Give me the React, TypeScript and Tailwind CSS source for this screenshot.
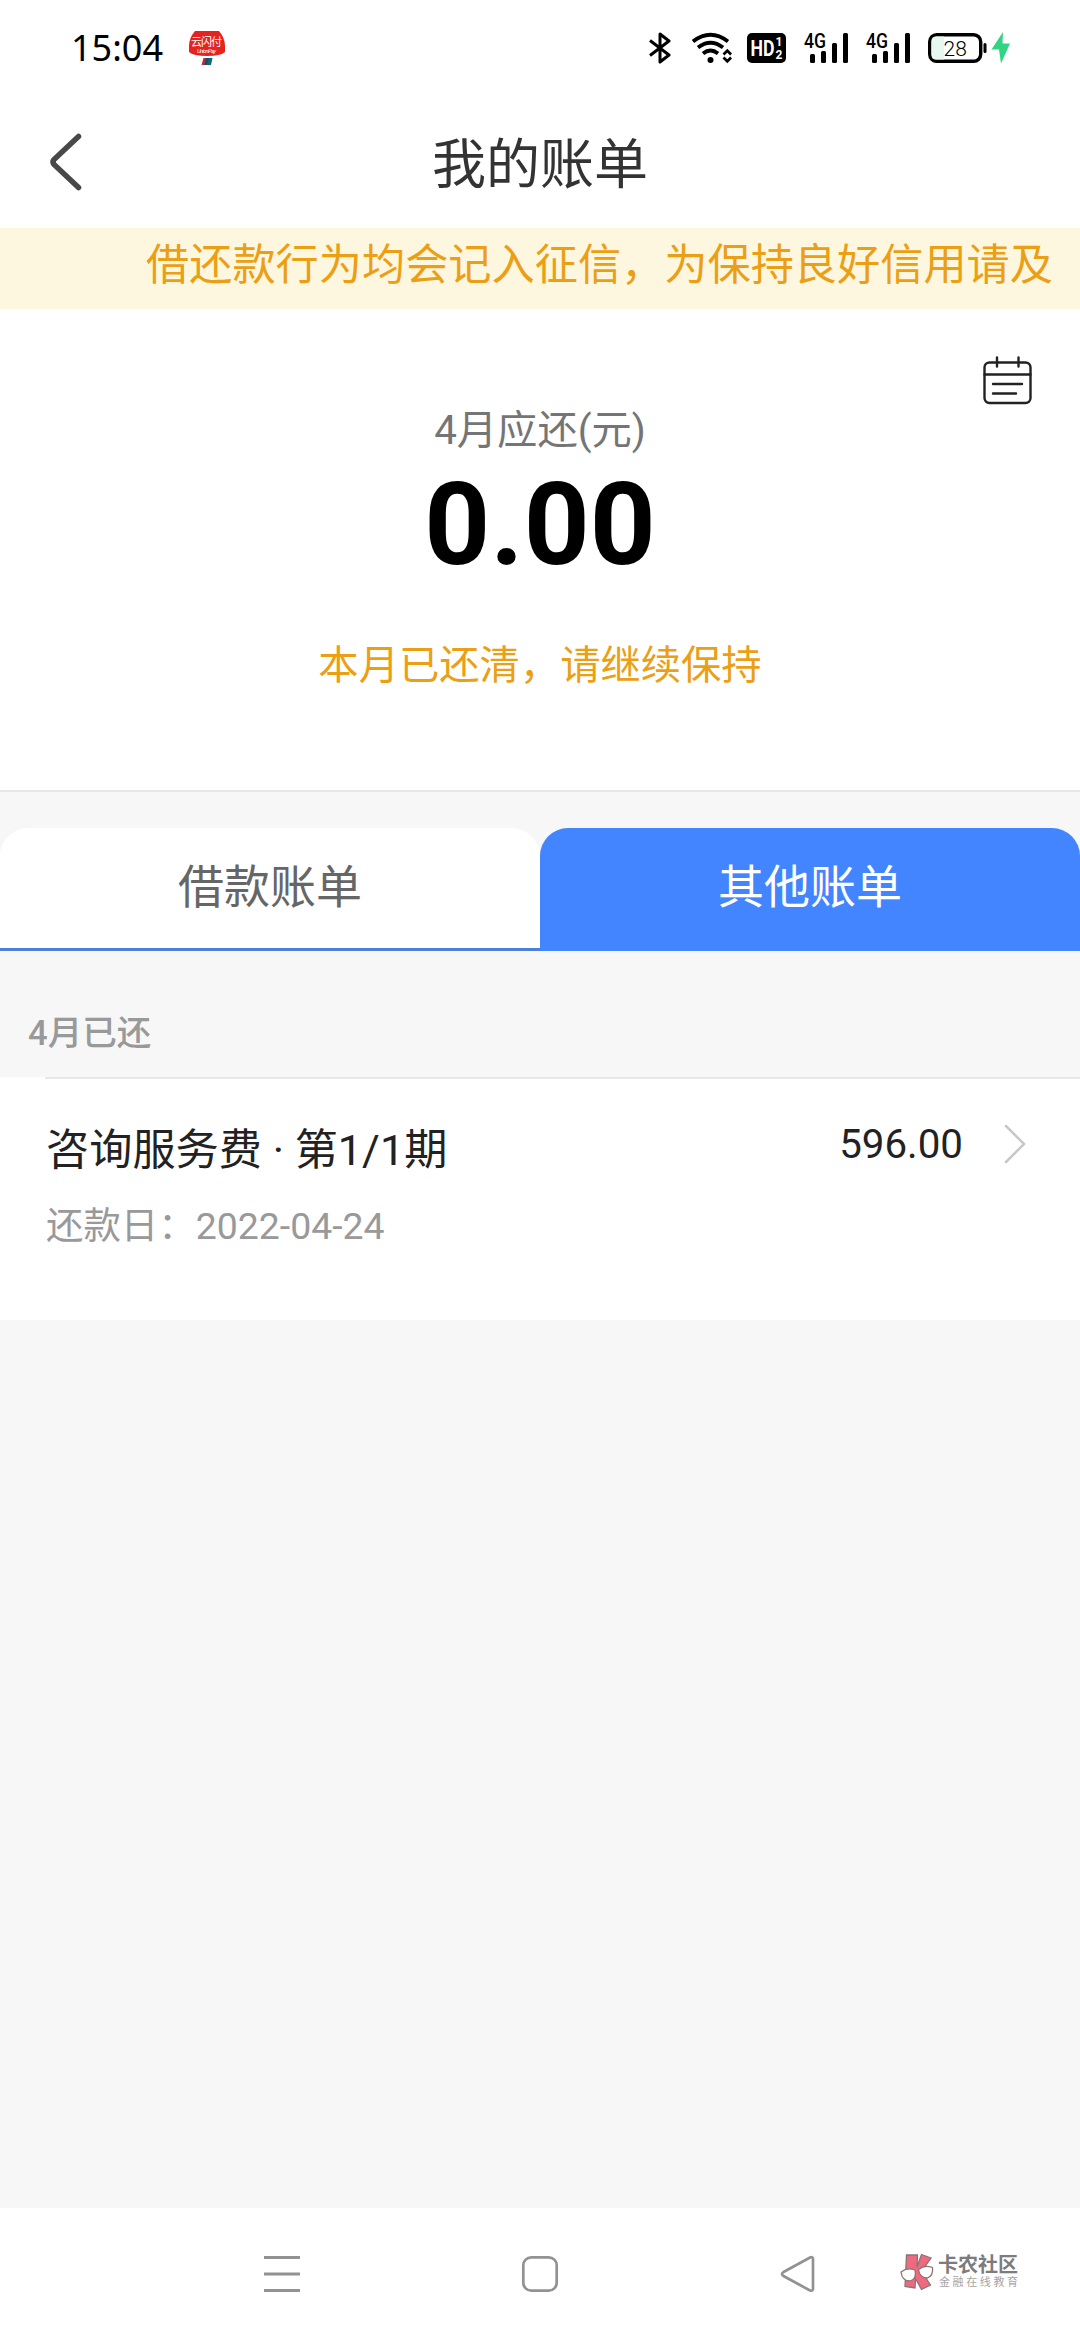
import React, { useState } from "react";

interface Bill {
  title: string;
  date: string;
  amount: string;
}

const tabs = ["借款账单", "其他账单"];

const bills: Bill[] = [
  { title: "咨询服务费 · 第1/1期", date: "2022-04-24", amount: "596.00" },
];

const SignalIcon: React.FC = () => (
  <svg width="46" height="40" viewBox="0 -4 46 40">
    <text
      x="0"
      y="15.500"
      fontSize="19.5"
      fontWeight="500"
      textLength="22"
      lengthAdjust="spacingAndGlyphs"
      fontFamily="Roboto, sans-serif"
    >
      4G
    </text>
    <rect x="6" y="22" width="5" height="9" rx="1.5" />
    <rect x="17" y="19" width="5" height="12" rx="1.5" />
    <rect x="28" y="11" width="5" height="20" rx="1.5" />
    <rect x="39" y="1" width="5" height="30" rx="1.5" />
  </svg>
);

const StatusBar: React.FC = () => (
  <div className="flex h-24 items-center bg-white pl-[71px]">
    <span className="w-[117px] font-['Noto_Sans'] text-[36px] leading-[94px] text-black">15:04</span>
    <svg width="38" height="36" viewBox="0 0 38 36">
      <path d="M7 1h24q6 7 6 15v6q-4 4-18 4t-18-4v-6q0-8 6-15z" fill="#e5231f" />
      <text x="3" y="15.500" fontSize="11" fill="#fff" textLength="31" fontFamily="'Noto Sans CJK SC', sans-serif">
        云闪付
      </text>
      <text x="9" y="22.5" fontSize="6" fontStyle="italic" fill="#fff" textLength="19" fontFamily="Roboto, sans-serif">
        UnionPay
      </text>
      <path d="M15.500 28h3.500l-1.500 7h-4z" fill="#b03040" />
      <path d="M18 28h4l-1.500 7h-4z" fill="#1d4a70" />
      <path d="M21 28h3.500l-1.500 7h-4z" fill="#0d6a70" />
    </svg>
    <svg className="ml-[422px]" width="24" height="32" viewBox="0 0 24 32" fill="none" stroke="#000" strokeWidth="3" strokeLinejoin="round">
      <path d="M2 8.500L21 23L12 30V2l9 7L2 23.500" />
    </svg>
    <svg className="ml-5" width="40" height="32" viewBox="0 0 40 32" fill="none" stroke="#000" strokeWidth="3.800">
      <path d="M1 9.500Q18.500-4 36 9.500" />
      <path d="M6 15.500Q18.500 6 31 15.500" />
      <path d="M11 21.500Q18.500 15.500 26 21.500" />
      <circle cx="18.500" cy="28" r="3" fill="#000" stroke="none" />
      <path d="M31.500 22.500l3.800-3.800l3.800 3.800M31.500 25.500l3.800 3.800l3.800-3.800" strokeWidth="2.700" />
    </svg>
    <svg className="ml-[15px]" width="40" height="32" viewBox="0 0 40 32">
      <rect x="0" y="1" width="39" height="30" rx="5" />
      <g fill="#fff" fontFamily="Roboto, sans-serif" fontWeight="700">
        <text x="3.500" y="23.500" fontSize="21.500" textLength="24" lengthAdjust="spacingAndGlyphs">HD</text>
        <text x="28.500" y="14" fontSize="12">1</text>
        <text x="28.500" y="26.500" fontSize="12">2</text>
      </g>
    </svg>
    <div className="ml-[17px] flex gap-4">
      <SignalIcon />
      <SignalIcon />
    </div>
    <svg className="ml-[16px]" width="86" height="34" viewBox="0 0 86 34">
      <rect x="1.700" y="3.700" width="51" height="26.600" rx="7" fill="#fff" stroke="#000" strokeWidth="3.400" />
      <path d="M3.500 10q0-4.500 4.500-4.500h8v23h-8q-4.500 0-4.500-4.500z" fill="#e8f8f1" />
      <text x="15.500" y="24.500" fontSize="21" fontWeight="300" fontFamily="Roboto, sans-serif">28</text>
      <rect x="55.500" y="12" width="3" height="10" rx="1.500" />
      <path d="M75 1L63.500 18.500h7.500L73 32.500L82 12.500h-7.500z" fill="#2fd583" />
    </svg>
  </div>
);

const Header: React.FC = () => (
  <header className="flex h-[132px] items-center bg-white">
    <button className="flex w-[180px] pl-12">
      <svg width="36" height="62" viewBox="0 0 36 62" fill="none" stroke="#484848" strokeWidth="5.500" strokeLinecap="round">
        <path d="M30.500 5.500L6 28.500Q4 31 6 33.500L30.500 56.500" />
      </svg>
    </button>
    <h1 className="flex-1 pt-2 text-center text-[54px] leading-[132px] text-[#333]">我的账单</h1>
    <div className="w-[180px]" />
  </header>
);

const Summary: React.FC = () => (
  <section className="flex h-[483px] flex-col items-center border-b-2 border-[#e8e8e8] bg-white">
    <div className="flex h-[99px] w-full justify-end pr-12 pt-[47px]">
      <svg width="49" height="50" viewBox="0 0 49 50" fill="none" stroke="#222" strokeWidth="2.400" strokeLinecap="round">
        <rect x="1.500" y="6.500" width="46" height="40.500" rx="5" />
        <path d="M1.500 18.500h46M14 1.500v9M35.500 1.500v9M10 28h29M10 37.500h23" />
      </svg>
    </div>
    <p className="text-[40.300px] leading-[46px] text-[#757575]">4月应还(元)</p>
    <p className="mt-[11px] text-[115px] font-bold leading-[120px] text-black">0.00</p>
    <p className="mt-[58px] text-[40.300px] leading-[46px] text-[#eb9f15]">本月已还清，请继续保持</p>
  </section>
);

const BillRow: React.FC<{ bill: Bill }> = ({ bill }) => (
  <li className="flex h-[243px] flex-col bg-white">
    <div className="ml-[45px] h-[2px] shrink-0 bg-[#e8e8e8]" />
    <div className="flex justify-between pl-[46px] pr-[53px] pt-[46px]">
      <div>
        <p className="text-[43.200px] leading-[52px] text-[#222]">{bill.title}</p>
        <p className="mt-[24px] text-[37.440px] leading-[50px] text-[#999]">还款日：{bill.date}</p>
      </div>
      <div className="flex h-[39px] items-center gap-[40px]">
        <span className="text-[40.300px] leading-[40px] text-[#222]">{bill.amount}</span>
        <svg width="24" height="40" viewBox="0 0 24 40" fill="none" stroke="#c8c8c8" strokeWidth="2.600" strokeLinecap="round">
          <path d="M3 1L21 19L3 37" />
        </svg>
      </div>
    </div>
  </li>
);

const NavBar: React.FC = () => (
  <nav className="flex h-[132px] items-center bg-white pl-[262px]">
    <svg width="40" height="40" viewBox="0 0 40 40" stroke="#929292" strokeWidth="3.200">
      <path d="M2 3.500h36M2 20h36M2 36.500h36" />
    </svg>
    <svg className="ml-[218px]" width="40" height="40" viewBox="0 0 40 40" fill="none" stroke="#929292" strokeWidth="2.700">
      <rect x="3.300" y="3.300" width="33.400" height="33.400" rx="8" />
    </svg>
    <svg className="ml-[219px]" width="40" height="40" viewBox="0 0 40 40" fill="none" stroke="#929292" strokeWidth="2.700">
      <path d="M4.500 18L31 3.500Q34 2.500 34 5V34.500Q34 37.500 31 36.500L4.500 22Q1.500 20 4.500 18z" />
    </svg>
    <div className="ml-[81px] flex items-center gap-[3px] pb-1">
      <svg width="35" height="38" viewBox="0 0 35 38" stroke="#8a7376" strokeWidth="1.300">
        <path d="M6.500 2h11l-.5 12l4.500-12.500l9.500 3.500l-9.500 13.500l9 13.500l-9 4.500l-6-11l-.5 9.500l-10-1.500z" fill="#f0697e" />
        <path d="M1 19q6-5 14-2q2 9-5 11q-8 0-9-9z" fill="#fff" />
        <path d="M18.500 16.500q6-5 14-2q1 8-5 10.500q-8 0-9-8.500z" fill="#fff" />
      </svg>
      <div className="flex flex-col whitespace-nowrap">
        <span className="text-[20px] font-bold leading-[20px] text-[#7c7c7c]">卡农社区</span>
        <span className="mt-[2px] pl-px text-[11px] leading-[12px] tracking-[2.600px] text-[#a5a5a5]">金融在线教育</span>
      </div>
    </div>
  </nav>
);

export default function App() {
  const [activeTab, setActiveTab] = useState(1);

  return (
    <div className="flex h-[2340px] w-[1080px] flex-col overflow-hidden bg-[#f7f7f7] font-[Roboto,'Noto_Sans_CJK_SC',sans-serif]">
      <StatusBar />
      <Header />
      <div className="h-[81px] overflow-hidden whitespace-nowrap bg-[#fef7e0] pl-[146px] text-[43.200px] leading-[76px] text-[#eb9f15]">
        借还款行为均会记入征信，为保持良好信用请及
      </div>
      <Summary />
      <div className="mt-9 flex h-[123px]">
        {tabs.map((tab, index) => (
          <button
            key={tab}
            onClick={() => setActiveTab(index)}
            className={
              index === activeTab
                ? "flex-1 rounded-t-[28px] bg-[#4285ff] pb-1 text-[46px] text-white"
                : "flex flex-1 flex-col border-b-[3px] border-[#4c7fd6] text-[46px] text-[#666]"
            }
          >
            {index === activeTab ? (
              tab
            ) : (
              <span className="h-[120px] w-full rounded-t-[28px] bg-white leading-[119px]">{tab}</span>
            )}
          </button>
        ))}
      </div>
      <h2 className="h-[126px] pl-7 pt-[57px] text-[34.560px] font-medium leading-[50px] text-[#999]">4月已还</h2>
      <ul className="flex-1">
        {bills.map((bill) => (
          <BillRow key={bill.title} bill={bill} />
        ))}
      </ul>
      <NavBar />
    </div>
  );
}
